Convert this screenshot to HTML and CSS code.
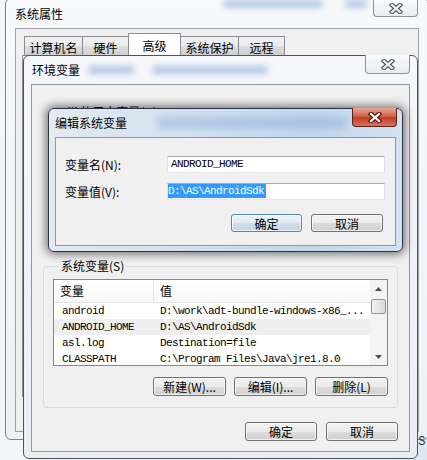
FILE: index.html
```html
<!DOCTYPE html>
<html lang="zh-CN">
<head>
    <meta charset="UTF-8">
    <title>系统属性 - 环境变量</title>
    <link rel="stylesheet" href="styles.css">
</head>
<body>
    <div class="desktop">
        <div class="behind-text">(S)</div>

        <!-- 系统属性 (bottom window) -->
        <div class="window sys-window">
            <div class="titlebar">
                <span class="title">系统属性</span>
                <span class="glass-blur sys-blur-a"></span>
                <span class="glass-blur sys-blur-b"></span>
                <button class="close-btn">
                    <svg width="14" height="11" viewBox="0 0 14 11"><path class="x-outline" d="M3 2 L11 9 M11 2 L3 9"/><path class="x-fill" d="M3 2 L11 9 M11 2 L3 9"/></svg>
                </button>
            </div>
            <div class="client sys-client">
                <div class="tabs">
                    <div class="tab tab-w1">计算机名</div>
                    <div class="tab tab-w2">硬件</div>
                    <div class="tab tab-w3 active">高级</div>
                    <div class="tab tab-w1">系统保护</div>
                    <div class="tab tab-w2">远程</div>
                </div>
                <div class="tab-page"></div>
            </div>
        </div>

        <!-- 环境变量 -->
        <div class="window env-window">
            <div class="titlebar">
                <span class="title">环境变量</span>
                <span class="glass-blur env-blur-a"></span>
                <span class="glass-blur env-blur-b"></span>
                <button class="close-btn env-close">
                    <svg width="14" height="11" viewBox="0 0 14 11"><path class="x-outline" d="M3 2 L11 9 M11 2 L3 9"/><path class="x-fill" d="M3 2 L11 9 M11 2 L3 9"/></svg>
                </button>
            </div>
            <div class="client env-client">
                <div class="user-vars">
                    <p class="group-label">Guili 的用户变量(U)</p>
                </div>

                <fieldset class="group">
                    <legend>系统变量(S)</legend>
                    <div class="list-view">
                        <div class="list-body">
                            <div class="list-row list-head">
                                <span class="col-name">变量</span>
                                <span class="col-value">值</span>
                            </div>
                            <div class="list-row">
                                <span class="col-name">android</span>
                                <span class="col-value">D:\work\adt-bundle-windows-x86_...</span>
                            </div>
                            <div class="list-row selected">
                                <span class="col-name">ANDROID_HOME</span>
                                <span class="col-value">D:\AS\AndroidSdk</span>
                            </div>
                            <div class="list-row">
                                <span class="col-name">asl.log</span>
                                <span class="col-value">Destination=file</span>
                            </div>
                            <div class="list-row">
                                <span class="col-name">CLASSPATH</span>
                                <span class="col-value">C:\Program Files\Java\jre1.8.0</span>
                            </div>
                        </div>
                        <div class="scrollbar">
                            <div class="sb-arrow">
                                <svg width="7" height="4" viewBox="0 0 7 4"><path d="M0 4 L3.5 0 L7 4 Z"/></svg>
                            </div>
                            <div class="sb-track"><div class="sb-thumb"></div></div>
                            <div class="sb-arrow">
                                <svg width="7" height="4" viewBox="0 0 7 4"><path d="M0 0 L7 0 L3.5 4 Z"/></svg>
                            </div>
                        </div>
                    </div>
                    <div class="button-row">
                        <button class="btn btn-wide">新建(W)...</button>
                        <button class="btn btn-wide">编辑(I)...</button>
                        <button class="btn btn-wide">删除(L)</button>
                    </div>
                </fieldset>

                <div class="button-row dialog-buttons">
                    <button class="btn">确定</button>
                    <button class="btn">取消</button>
                </div>
            </div>
        </div>

        <!-- 编辑系统变量 (top dialog) -->
        <div class="window edit-window">
            <div class="titlebar">
                <span class="title">编辑系统变量</span>
                <span class="glass-blur edit-blur"></span>
                <button class="close-btn close-red">
                    <svg width="14" height="11" viewBox="0 0 14 11"><path class="x-outline" d="M3 2 L11 9 M11 2 L3 9"/><path class="x-fill" d="M3 2 L11 9 M11 2 L3 9"/></svg>
                </button>
            </div>
            <div class="client edit-client">
                <div class="field-row">
                    <label class="field-label">变量名(N):</label>
                    <div class="field">ANDROID_HOME</div>
                </div>
                <div class="field-row">
                    <label class="field-label">变量值(V):</label>
                    <div class="field field-selected"><span class="selection">D:\AS\AndroidSdk</span></div>
                </div>
                <div class="button-row edit-buttons">
                    <button class="btn btn-default">确定</button>
                    <button class="btn">取消</button>
                </div>
            </div>
        </div>
    </div>
</body>
</html>
```

FILE: styles.css
```css
* { margin: 0; padding: 0; box-sizing: border-box; }
html, body { width: 427px; height: 460px; overflow: hidden; }
body { font-family: "Noto Sans CJK SC", "Noto Sans", sans-serif; font-size: 12px; color: #000; background: #e9eff5; }

.desktop { position: relative; width: 427px; height: 460px; overflow: hidden; background: linear-gradient(90deg, #f3f6f9, #dfe8f1); }
.behind-text { position: absolute; left: 411px; top: 435px; z-index: 2; font: 12px "Liberation Mono", monospace; color: #24364a; }

/* windows on the desktop */
.window { position: absolute; display: flex; flex-direction: column; border: 1px solid #5f6670; border-radius: 6px; }
.sys-window { left: 5px; top: -2px; width: 424px; height: 442px; padding: 0 9px 7px; z-index: 1; border-color: #7b838d; background: linear-gradient(180deg, #f7f9fb, #edf1f5); }
.env-window { left: 23px; top: 55px; width: 395px; height: 404px; padding: 0 7px 6px; z-index: 3; border-color: #4d545e; background: linear-gradient(180deg, #f5f7fa, #eaeef3); }
.edit-window { left: 48px; top: 108px; width: 355px; height: 144px; padding: 0 6px 5px; z-index: 4; border-color: #2a3442; background: linear-gradient(90deg, #e3eaf1, #cfdff0 45%, #c2d6ec 75%, #d3e2f1); box-shadow: 0 0 10px 2px rgba(0, 0, 0, 0.55); }

.titlebar { display: flex; align-items: center; flex: none; height: 29px; }
.env-window .titlebar, .edit-window .titlebar { height: 28px; }
.title { flex: none; font-size: 12px; line-height: 16px; color: #000; }
.env-window .title { padding-left: 1px; }

.glass-blur { display: block; flex: none; height: 8px; border-radius: 4px; background: #7d9fd0; filter: blur(3px); opacity: 0.55; }
.sys-blur-a { align-self: flex-start; margin: 1px 0 0 160px; width: 100px; }
.sys-blur-b { align-self: flex-start; margin: 1px 0 0 22px; width: 22px; }
.env-blur-a { margin-left: 8px; width: 46px; }
.env-blur-b { margin-left: 18px; width: 116px; }
.edit-blur { margin-left: 30px; width: 190px; height: 12px; opacity: 0.35; }

.close-btn { align-self: flex-start; display: flex; align-items: center; justify-content: center; width: 45px; height: 17px; margin: 1px 1px 0 auto; border: 1px solid #8d939b; border-top: none; border-radius: 0 0 4px 4px; background: linear-gradient(180deg, #f8fafc, #e7ecf1); }
.env-close { height: 19px; margin: -1px 0 0 auto; }
.close-red { height: 19px; margin: -1px -1px 0 auto; border: 1px solid #5e2219; border-top: none; background: linear-gradient(180deg, #e8a797, #d5614b 45%, #c23d27 55%, #d9745c); }
.x-outline { fill: none; stroke: #5b5f66; stroke-width: 4.6; stroke-linecap: square; }
.x-fill { fill: none; stroke: #f0f2f4; stroke-width: 2.2; stroke-linecap: square; }
.close-red .x-outline { stroke: #5a1d14; }
.close-red .x-fill { stroke: #fff; }

.client { flex: 1; background: #f0f0f0; border: 1px solid #8e99a6; }

/* 系统属性 tabs */
.sys-client { padding: 4px 6px 0; border-color: #9aa3ad; }
.tabs { position: relative; z-index: 1; display: flex; align-items: flex-end; height: 22px; padding-left: 2px; }
.tab { height: 19px; margin-right: -1px; border: 1px solid #898c95; border-bottom: none; padding-top: 2px; text-align: center; line-height: 17px; background: linear-gradient(180deg, #f2f2f2, #ebebeb 50%, #dddddd 51%, #cfcfcf); }
.tab-w1 { width: 59px; }
.tab-w2 { width: 47px; }
.tab-w3 { width: 53px; }
.tab.active { position: relative; height: 23px; margin-bottom: -1px; padding-top: 3px; background: #fff; }
.tab-page { height: 342px; border: 1px solid #898c95; background: #fff; }

/* 环境变量 content */
.env-client { display: flex; flex-direction: column; padding: 16px 11px 0; }
.user-vars { height: 157px; flex: none; padding-top: 3px; }
.group-label { margin-left: 9px; line-height: 16px; }

.group { margin: 0; min-width: 0; padding: 5px 9px 11px; border: 1px solid #d5dfe5; border-radius: 3px; }
.group legend { margin-left: 6px; padding: 0 2px; line-height: 16px; }

.list-view { display: flex; height: 87px; border: 1px solid #828790; background: #fff; }
.list-body { flex: 1; min-width: 0; overflow: hidden; }
.list-row { display: flex; height: 16px; font-family: "Liberation Mono", monospace; font-size: 11px; letter-spacing: -0.6px; line-height: 16px; white-space: nowrap; }
.list-row .col-name { flex: none; width: 99px; padding-left: 8px; overflow: hidden; }
.list-row .col-value { flex: 1; padding-left: 7px; overflow: hidden; }
.list-row.selected { background: #efefef; }
.list-head { height: 23px; font-family: "Noto Sans CJK SC", "Noto Sans", sans-serif; font-size: 12px; letter-spacing: 0; line-height: 22px; border-bottom: 1px solid #e5e5e5; background: linear-gradient(180deg, #fff, #f7f8f9); }
.list-head .col-name { width: 100px; padding-left: 6px; border-right: 1px solid #e5e5e5; }
.list-head .col-value { padding-left: 6px; }

.scrollbar { display: flex; flex-direction: column; flex: none; width: 17px; background: #f3f3f3; }
.sb-arrow { display: flex; align-items: center; justify-content: center; height: 17px; flex: none; }
.sb-arrow svg path { fill: #4f4f4f; }
.sb-track { flex: 1; }
.sb-thumb { height: 15px; margin: 2px 1px 0; border: 1px solid #959595; border-radius: 2px; background: linear-gradient(90deg, #f3f3f3, #e6e6e6 50%, #d8d8d8); }

.button-row { display: flex; justify-content: flex-end; gap: 8px; margin-top: 11px; }
.dialog-buttons { gap: 9px; margin-top: 14px; }

.btn { width: 72px; height: 19px; border: 1px solid #707070; border-radius: 3px; font-family: "Noto Sans CJK SC", "Noto Sans", sans-serif; font-size: 12px; line-height: 16px; color: #000; background: linear-gradient(180deg, #f2f2f2, #ebebeb 50%, #dddddd 51%, #cfcfcf); box-shadow: inset 0 0 0 1px rgba(255, 255, 255, 0.7); }
.btn-wide { width: 73px; }
.btn-default { width: 71px; border-color: #4d87b5; background: linear-gradient(180deg, #eef5fa, #dde9f2 50%, #cfdfeb 51%, #c2d6e6); }

/* 编辑系统变量 content */
.edit-client { padding: 18px 10px 0 9px; border-color: #8c99a8; }
.field-row { display: flex; align-items: center; height: 17px; }
.field-row + .field-row { margin-top: 10px; }
.field-label { flex: none; width: 102px; line-height: 16px; }
.field { width: 219px; height: 17px; padding-left: 3px; border: 1px solid #abadb3; border-color: #abadb3 #dbdfe6 #e3e9ef #e2e3ea; background: #fff; font-family: "Liberation Mono", monospace; font-size: 11px; letter-spacing: -0.6px; line-height: 15px; white-space: nowrap; }
.field-selected { padding-left: 0; }
.selection { display: inline-block; height: 14px; margin-top: 0; padding-right: 2px; line-height: 14px; vertical-align: top; color: #fff; background: #3399ff; }
.edit-buttons { gap: 9px; margin-top: 14px; margin-right: 2px; }
.edit-buttons .btn { height: 18px; line-height: 15px; }
```
